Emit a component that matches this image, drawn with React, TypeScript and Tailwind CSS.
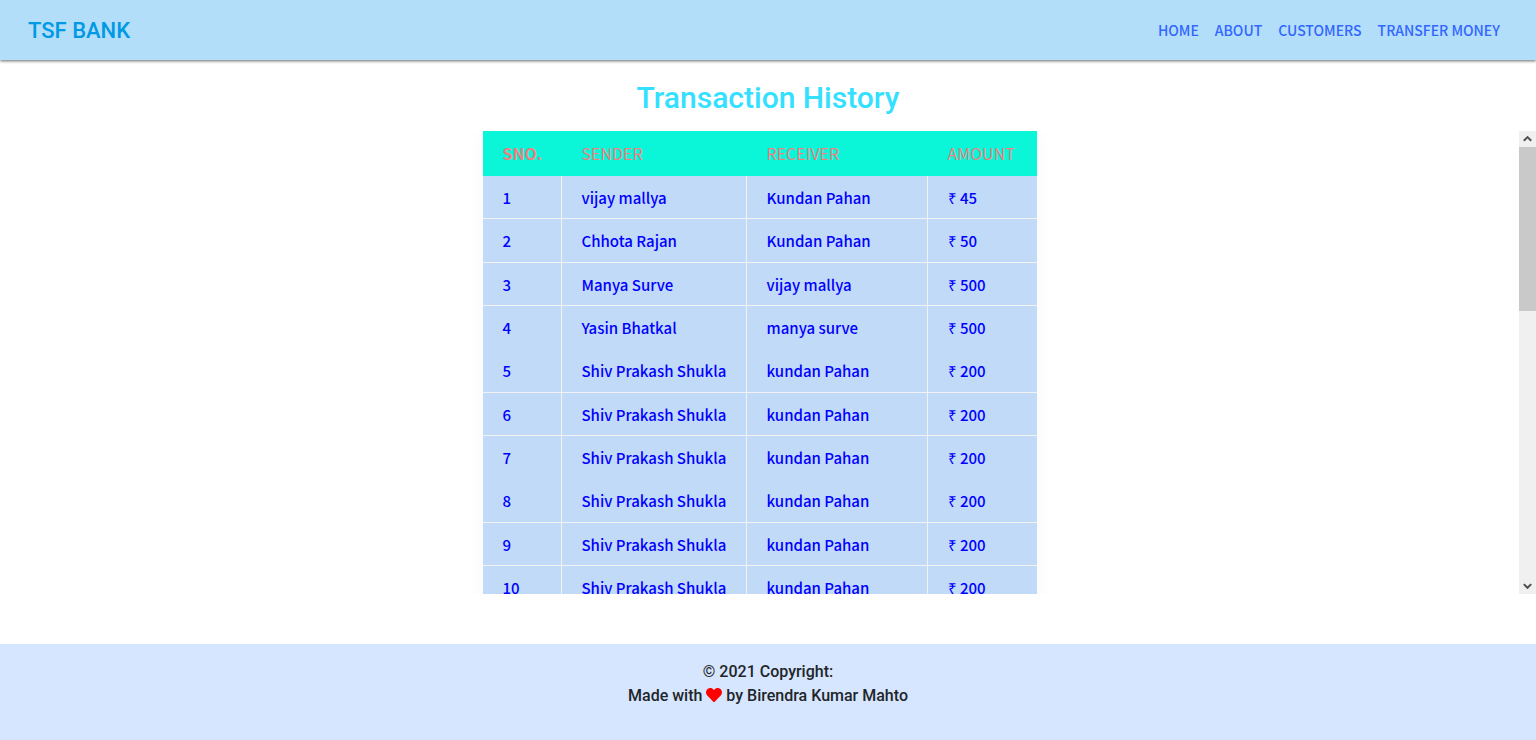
import { useLayoutEffect, useRef, useState } from "react";
import { FaHeart } from "react-icons/fa";

type Transaction = { sender: string; receiver: string; amount: number };

const repeated: Transaction = {
  sender: "Shiv Prakash Shukla",
  receiver: "kundan Pahan",
  amount: 200,
};

const transactions: Transaction[] = [
  { sender: "vijay mallya", receiver: "Kundan Pahan", amount: 45 },
  { sender: "Chhota Rajan", receiver: "Kundan Pahan", amount: 50 },
  { sender: "Manya Surve", receiver: "vijay mallya", amount: 500 },
  { sender: "Yasin Bhatkal", receiver: "manya surve", amount: 500 },
  ...Array.from({ length: 23 }, () => repeated),
];

const links = ["HOME", "ABOUT", "CUSTOMERS", "TRANSFER MONEY"];

function Navbar() {
  return (
    <header className="relative flex h-15 items-center justify-between bg-[#b2defa] px-7 shadow-[0_1px_3px_rgba(0,0,0,0.6)]">
      <a href="#" className="text-[22px] font-medium text-[#0099e5]">
        TSF BANK
      </a>
      <nav className="flex gap-4 pr-2 font-['Noto_Sans_CJK_SC',sans-serif] text-sm font-medium text-[#3366ff]">
        {links.map((label) => (
          <a key={label} href="#">
            {label}
          </a>
        ))}
      </nav>
    </header>
  );
}

function HistoryTable() {
  return (
    <table className="mx-auto w-[554px] table-fixed border-separate border-spacing-0 bg-[#c1daf8] text-left font-['Noto_Sans_CJK_SC',sans-serif] text-[15px] shadow-[0_0_20px_rgba(0,0,0,0.03)]">
      <colgroup>
        <col className="w-[79px]" />
        <col className="w-[185px]" />
        <col className="w-[181px]" />
        <col className="w-[109px]" />
      </colgroup>
      <thead>
        <tr className="h-[45px] bg-[#0bf5d9] text-base text-[#f08080] [&>th]:px-5 [&>th]:pb-0.5">
          <th className="font-bold">SNO.</th>
          <th className="font-normal">SENDER</th>
          <th className="font-normal">RECEIVER</th>
          <th className="font-normal">AMOUNT</th>
        </tr>
      </thead>
      <tbody className="font-medium text-[#0000ff]">
        {transactions.map((t, i) => (
          <tr
            key={i}
            className="h-[43px] whitespace-nowrap nth-[3n+2]:h-11 [&>td]:border-r [&>td]:border-b [&>td]:border-[#f2f2f2] [&>td]:px-5 [&>td]:pt-0.5 [&>td:last-child]:border-r-0 nth-[3n+4]:[&>td]:border-b-0"
          >
            <td>{i + 1}</td>
            <td>{t.sender}</td>
            <td>{t.receiver}</td>
            <td>₹ {t.amount}</td>
          </tr>
        ))}
      </tbody>
    </table>
  );
}

function Arrow({ d }: { d: string }) {
  return (
    <svg viewBox="0 0 17 16" className="h-4 w-[17px]" fill="none" stroke="#505050" strokeWidth="2">
      <path d={d} />
    </svg>
  );
}

function ScrollPanel({ children }: { children: React.ReactNode }) {
  const view = useRef<HTMLDivElement>(null);
  const track = useRef<HTMLDivElement>(null);
  const [thumb, setThumb] = useState({ size: 0, offset: 0 });

  const update = () => {
    const v = view.current;
    const t = track.current;
    if (!v || !t) return;
    const scale = t.clientHeight / v.scrollHeight;
    setThumb({
      size: Math.floor(v.clientHeight * scale),
      offset: Math.round(v.scrollTop * scale),
    });
  };

  useLayoutEffect(update, []);

  return (
    <div className="mt-[11px] flex h-[463px]">
      <div
        ref={view}
        onScroll={update}
        className="min-w-0 flex-1 overflow-y-auto [scrollbar-width:none]"
      >
        {children}
      </div>
      <div className="flex w-[17px] flex-col bg-[#f0f0f0]">
        <button aria-label="Scroll up" onClick={() => view.current?.scrollBy(0, -43)}>
          <Arrow d="M4.8 9.8 8.5 6.1l3.7 3.7" />
        </button>
        <div ref={track} className="min-h-0 flex-1">
          <div
            className="bg-[#c9c9c9]"
            style={{ height: thumb.size, transform: `translateY(${thumb.offset}px)` }}
          />
        </div>
        <button aria-label="Scroll down" onClick={() => view.current?.scrollBy(0, 43)}>
          <Arrow d="M4.8 6.1l3.7 3.7 3.7-3.7" />
        </button>
      </div>
    </div>
  );
}

export default function App() {
  return (
    <div className="bg-white font-[Roboto,sans-serif]">
      <Navbar />
      <main>
        <h1 className="pt-4 text-center text-[30px] leading-[44px] font-medium text-[#33e0ff]">
          Transaction History
        </h1>
        <ScrollPanel>
          <HistoryTable />
        </ScrollPanel>
      </main>
      <footer className="mt-[50px] h-24 bg-[#d6e6ff] pt-4 text-center text-base leading-6 font-medium text-[#212529]">
        <p>© 2021 Copyright:</p>
        <p>
          Made with <FaHeart className="inline align-[-2px] text-[#ff0000]" /> by Birendra Kumar Mahto
        </p>
      </footer>
    </div>
  );
}
